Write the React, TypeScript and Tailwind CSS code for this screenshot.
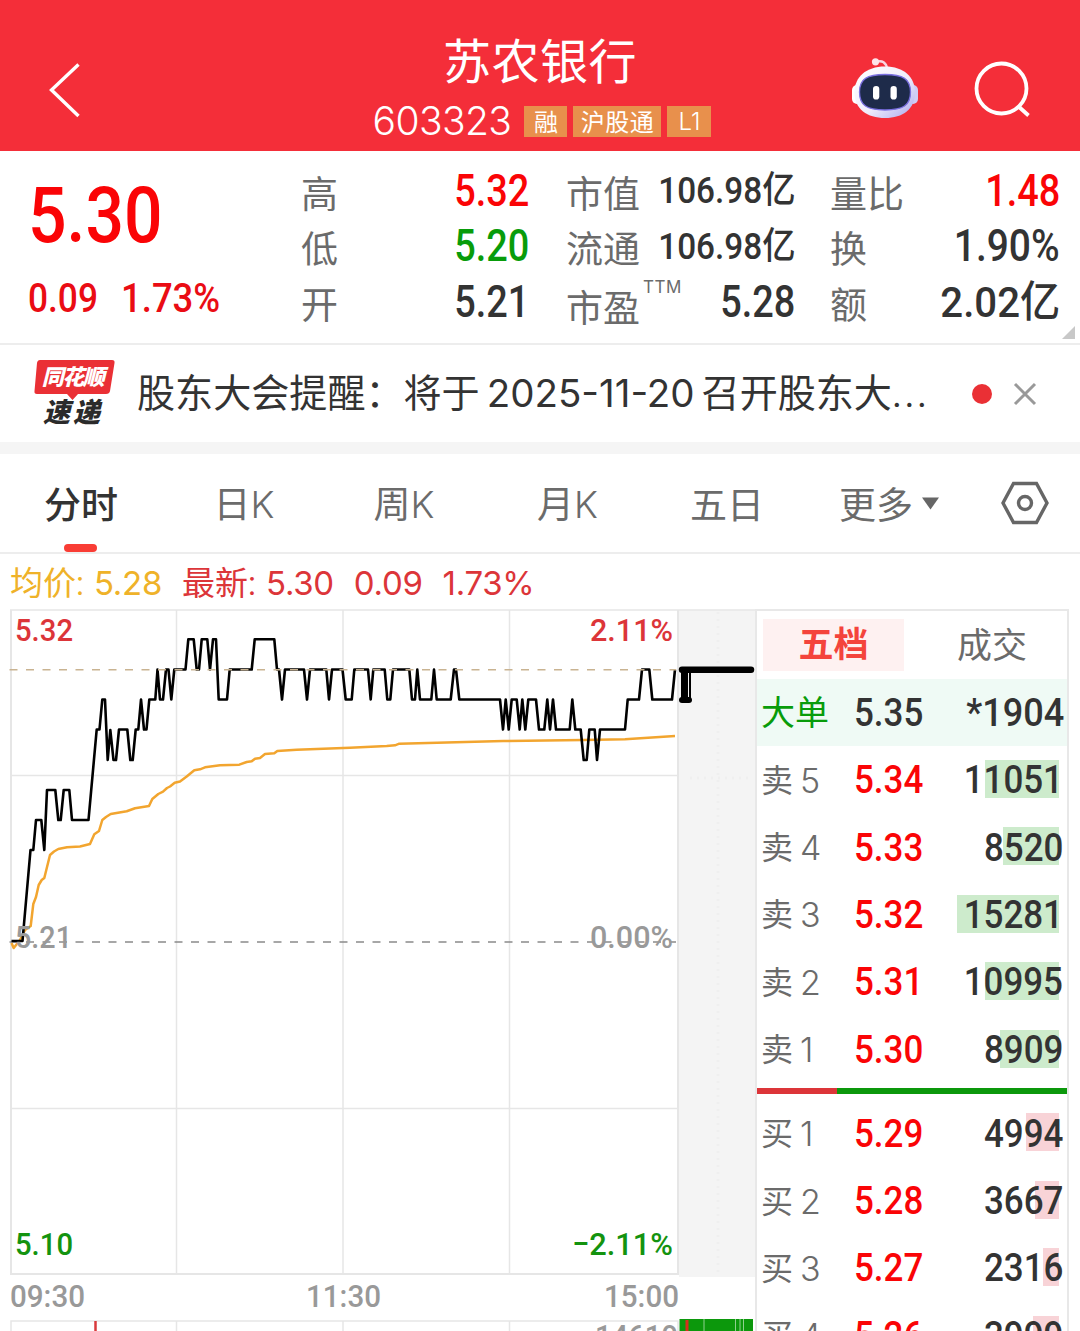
import React from 'react';
import { clsx } from 'clsx';

type Quote = { label: string; value: string; tone?: string; size?: string; sup?: string };
type Level = { label: string; price: string; volume: string; bar: number };

const quoteColumns: { box: string; items: Quote[] }[] = [
  {
    box: 'w-[228px]',
    items: [
      { label: '高', value: '5.32', tone: 'text-[#fa0406]' },
      { label: '低', value: '5.20', tone: 'text-[#089c0a]' },
      { label: '开', value: '5.21' },
    ],
  },
  {
    box: 'ml-[37px] w-[229px]',
    items: [
      { label: '市值', value: '106.98亿', size: 'scale-x-[.9] text-[37px]' },
      { label: '流通', value: '106.98亿', size: 'scale-x-[.9] text-[37px]' },
      { label: '市盈', value: '5.28', sup: 'TTM' },
    ],
  },
  {
    box: 'ml-[35px] w-[230px]',
    items: [
      { label: '量比', value: '1.48', tone: 'text-[#fa0406]' },
      { label: '换', value: '1.90%', size: 'scale-x-[.885] text-[44px]' },
      { label: '额', value: '2.02亿', size: 'scale-x-[.935] text-[43px]' },
    ],
  },
];

const asks: Level[] = [
  { label: '卖5', price: '5.34', volume: '11051', bar: 74 },
  { label: '卖4', price: '5.33', volume: '8520', bar: 56 },
  { label: '卖3', price: '5.32', volume: '15281', bar: 102 },
  { label: '卖2', price: '5.31', volume: '10995', bar: 74 },
  { label: '卖1', price: '5.30', volume: '8909', bar: 59 },
];

const bids: Level[] = [
  { label: '买1', price: '5.29', volume: '4994', bar: 33 },
  { label: '买2', price: '5.28', volume: '3667', bar: 24 },
  { label: '买3', price: '5.27', volume: '2316', bar: 16 },
  { label: '买4', price: '5.26', volume: '3999', bar: 26 },
];

const priceLine =
  '11.5,941 22.5,941 30.5,850 33.3,850 36,820 41.3,820 44.3,850 47,790 55.3,790 58.3,820 60.7,820 63.7,790 69.3,790 72,820 88.5,820 96.7,729.5 99.5,729.5 102.3,699.5 105,699.5 107.7,760 110.3,730 113.5,760 116,760 119,729.5 127.3,729.5 130.3,760 132.7,760 135.7,729.5 138.3,729.5 141,699.5 144,729.5 146.5,729.5 149.3,699.5 155.3,699.5 157.5,669.5 160,699.5 163,699.5 166,669.5 168.5,669.5 171.3,699.5 174.3,669.5 185.5,669.5 188.3,639.3 193.7,639.3 196.7,669.5 199,669.5 201.7,639.3 207.3,639.3 210,669.5 213,639.3 216,639.3 218.7,699.5 227,699.5 229.7,669.5 251.7,669.5 254.7,639.3 274.3,639.3 277,669.5 279,669.5 282,699.5 285,669.5 304,669.5 307,699.5 310,669.5 326.3,669.5 329,699.5 332,669.5 342.5,669.5 345.7,699.5 351.7,699.5 354.3,669.5 368,669.5 370.7,699.5 373.3,669.5 384.7,669.5 387.3,699.5 390.3,699.5 393,669.5 409.3,669.5 412,699.5 415,699.5 417.3,669.5 420,699.5 431.3,699.5 434,669.5 436.7,699.5 450.7,699.5 454,669.5 456,669.5 459.3,699.5 500,699.5 503,729.5 505.7,699.5 508.7,729.5 511.7,699.5 516.7,699.5 519.7,729.5 522.3,699.5 525.3,729.5 528.3,699.5 536,699.5 539,729.5 544.3,729.5 547.3,699.5 550,729.5 553,699.5 556,729.5 569.7,729.5 572.3,699.5 575.3,729.5 580.7,729.5 583.7,760 586.7,760 589.3,729.5 594.7,729.5 597,760 600,729.5 625,729.5 627.7,699.5 639,699.5 642,669.5 649.3,669.5 652.3,699.5 672,699.5 675,669.5';

const averageLine =
  '11.5,943 13.7,948 20,940 25,930 30.7,926 33.3,904 36,897 38.7,885 41.7,880 44.3,878 50,855 54,851.5 58.3,849 67,847.3 80,846.5 90,844 94.3,834.3 99,831 102.3,820 106,817 110.7,814 126.7,811.3 135,808.3 149,806 152.3,799 158.3,794 163,791.7 167,788 170,786.5 174.7,782.7 180,781.5 186.7,776.5 194.3,770.3 200,769.3 205,767.3 220,765.3 239.3,764.7 246.7,762 251.7,761.3 255,758.7 260,758 265,754 274.3,753.3 277.3,751 296.7,749.7 350,747.7 386.7,746 395,745.3 399.3,743.7 503.3,741 583.3,740 625,739.3 675,736';

// Narrow figures; the origin class decides which edge stays put
function Fig({ children, className }: { children: React.ReactNode; className?: string }) {
  return (
    <span className={clsx('inline-block whitespace-nowrap font-[Roboto,"Noto_Sans_CJK_SC",sans-serif] font-medium', className)}>
      {children}
    </span>
  );
}

function Header() {
  return (
    <header className="flex h-[151px] bg-[#f42e39] text-white">
      <div className="w-[300px] pt-[62px] pl-[48px]">
        <svg width="34" height="56" viewBox="0 0 34 56" fill="none" stroke="#fff" strokeWidth="3.4">
          <path d="M30.5 2.5 L3.5 28 L30.5 54" />
        </svg>
      </div>
      <div className="flex w-[480px] flex-col items-center">
        <h1 className="mt-[33px] text-[48px] leading-[60px] tracking-[0.5px]">苏农银行</h1>
        <div className="-mt-px flex h-[60px] items-center gap-[6px] pl-[4px] text-[24px]">
          <span className="mr-[7px] font-[Inter] text-[39px] font-[350] tracking-[-0.6px]">603323</span>
          <span className="flex h-[31px] w-[43px] items-center justify-center bg-[#e8904c] pt-[2px]">融</span>
          <span className="flex h-[31px] w-[88px] items-center justify-center bg-[#e8904c] pt-[2px] tracking-[0.5px]">沪股通</span>
          <span className="flex h-[31px] w-[44px] items-center justify-center bg-[#e8904c] font-[Inter] font-light">L1</span>
        </div>
      </div>
      <div className="flex flex-1 pt-[57px] pl-[70px]">
        <svg width="70" height="64" viewBox="0 0 70 64" fill="none">
          <defs>
            <linearGradient id="helmet" x1="0" y1="0" x2="1" y2="1">
              <stop offset="0" stopColor="#ffffff" />
              <stop offset="0.55" stopColor="#f0edfb" />
              <stop offset="1" stopColor="#a9a7ee" />
            </linearGradient>
          </defs>
          <path d="M26 5 C32 2.500 36.500 6 37 12" stroke="#f9d5e0" strokeWidth="2.500" />
          <circle cx="25.500" cy="4.800" r="3.600" fill="#fde4ea" />
          <rect x="2" y="28" width="10" height="19" rx="5" fill="#fff" />
          <rect x="58" y="28" width="10" height="19" rx="5" fill="#cfcdf6" />
          <path d="M35 9.500 C54 9.500 65 20 65 35.500 C65 52 53 61 35 61 C17 61 4.500 52 4.500 35.500 C4.500 20 16 9.500 35 9.500Z" fill="url(#helmet)" />
          <path d="M35 17.500 C53 17.500 60.500 22 60.500 35 C60.500 48.500 53 53 35 53 C17 53 9.500 48.500 9.500 35 C9.500 22 17 17.500 35 17.500Z" fill="#1e2b4a" stroke="#7a6fe0" strokeWidth="1.300" />
          <rect x="23" y="29" width="6.300" height="13.600" rx="3.100" fill="#fff" />
          <rect x="40.500" y="29" width="6.300" height="13.600" rx="3.100" fill="#fff" />
        </svg>
        <svg className="mt-[2px] ml-[53px]" width="60" height="58" viewBox="0 0 60 58" fill="none" stroke="#fff" strokeWidth="3.8">
          <circle cx="28.500" cy="29.500" r="25" />
          <path d="M45 47 L55.500 56.500" />
        </svg>
      </div>
    </header>
  );
}

function Quotes() {
  return (
    <section className="relative flex h-[194px] border-b-2 border-[#ededed] pl-[28px]">
      <div className="w-[273px] text-[#fa0406]">
        <div className="h-[122px] pt-[15px]">
          <Fig className="origin-left scale-x-[.875] text-[77.500px] leading-[100px]">5.30</Fig>
        </div>
        <div className="flex text-[#ea0c14]">
          <div className="w-[93px]">
            <Fig className="origin-left scale-x-[.86] text-[41px] leading-[50px]">0.09</Fig>
          </div>
          <Fig className="origin-left scale-x-[.89] text-[41px] leading-[50px]">1.73%</Fig>
        </div>
      </div>
      <div className="flex pt-[12px]">
        {quoteColumns.map((column, i) => (
          <div key={i} className={column.box}>
            {column.items.map((item) => (
              <div key={item.label} className="flex h-[55.5px] items-center justify-between">
                <span className={clsx('relative text-[37px] text-[#6b6b6b]', item.sup ? 'pt-[15px]' : 'pt-[9px]')}>
                  {item.label}
                  {item.sup && <sup className="absolute top-[12px] left-[77px] font-[Inter] text-[17px] leading-none tracking-[0.5px]">{item.sup}</sup>}
                </span>
                <Fig className={clsx('origin-right', item.size ?? 'scale-x-[.86] text-[44px]', item.tone ?? 'text-[#333]')}>
                  {item.value}
                </Fig>
              </div>
            ))}
          </div>
        ))}
      </div>
      <svg className="absolute right-[5px] bottom-[4px]" width="13" height="13">
        <path d="M13 0V13H0Z" fill="#c8c8c8" />
      </svg>
    </section>
  );
}

function NewsBar() {
  return (
    <section className="flex h-[97px] items-center pl-[33px]">
      <div className="relative h-[68px] w-[82px] italic">
        <svg className="absolute top-0 left-0" width="82" height="42">
          <path d="M7 0 H79 Q82 0 81.500 3 L77 31 Q76.500 34 73 34 H45 L39.500 40 L34 34 H4 Q1 34 1.500 31 L4 3 Q4.500 0 7 0Z" fill="#ea3035" />
        </svg>
        <div className="relative pt-[2px] pr-[3px] text-center text-[22px] leading-[32px] font-black tracking-[-1.5px] text-white">同花顺</div>
        <div className="relative pt-[5px] pr-[2px] text-center text-[27px] leading-[28px] font-black tracking-[3px] text-[#2b2b2b]">速递</div>
      </div>
      <p className="ml-[22px] w-[800px] pt-[2px] text-[38.100px] whitespace-nowrap text-[#333]">
        股东大会提醒：将于<span className="mx-[7px] font-[Inter] text-[38.500px]">2025-11-20</span>召开股东大<span className="tracking-[2.500px]">...</span>
      </p>
      <span className="ml-[35px] size-[20px] rounded-full bg-[#ea3035]" />
      <svg className="ml-[21px]" width="24" height="24" stroke="#999" strokeWidth="3">
        <path d="M2 2 L22 22 M22 2 L2 22" />
      </svg>
    </section>
  );
}

function Tabs() {
  return (
    <nav className="flex h-[112px] items-center border-t-[12px] border-b-2 border-t-[#f5f5f5] border-b-[#ededed] text-[37px] text-[#6b6b6b]">
      <div className="relative flex h-full w-[162px] items-center justify-center pt-[8px] font-medium text-[#333]">
        分时
        <span className="absolute bottom-0 left-[64px] h-[8px] w-[33px] rounded-full bg-[#f93d35]" />
      </div>
      <span className="w-[164px] pt-[5px] text-center">日<span className="font-[Inter] font-light">K</span></span>
      <span className="w-[156px] pt-[5px] text-center">周<span className="font-[Inter] font-light">K</span></span>
      <span className="w-[171px] pt-[5px] text-center">月<span className="font-[Inter] font-light">K</span></span>
      <span className="w-[148px] pt-[8px] text-center">五日</span>
      <span className="ml-[38px] pt-[8px]">更多</span>
      <svg className="ml-[9px]" width="17" height="13">
        <path d="M0 0.500 H17 L8.500 12.500Z" fill="#666" />
      </svg>
      <svg className="ml-[62px]" width="48" height="44" viewBox="0 0 48 44" fill="none" stroke="#666" strokeWidth="3.400">
        <path d="M12.500 2.500 H35.500 L46 22 L35.500 41.500 H12.500 L2 22Z" />
        <circle cx="24" cy="22" r="6.500" />
      </svg>
    </nav>
  );
}

function Chart() {
  return (
    <svg className="block shrink-0" width="755" height="722" viewBox="0 609 755 722" fill="none">
      <rect x="679" y="610" width="76" height="667" fill="#f4f4f4" />
      <g stroke="#e6e6e6" strokeWidth="1.500">
        <path d="M10 610 H755 M11 775.500 H677 M11 1108.500 H677 M176.500 610 V1274 M343 610 V1274 M509.500 610 V1274" />
        <path d="M11 610 V1274 H678 V610" strokeWidth="2" />
        <path d="M11 1331 V1321 H678 V1331 M176.500 1321 V1331 M343 1321 V1331 M509.500 1321 V1331" />
      </g>
      <path d="M718 612 V1276 M690 778 H753" stroke="#efefef" strokeWidth="3" strokeDasharray="2 5" />
      <g fontFamily="Roboto, sans-serif" fontWeight="500" fontSize="32">
        <text x="15" y="641" textLength="58" lengthAdjust="spacingAndGlyphs" fill="#dc3539">5.32</text>
        <text x="590" y="641" textLength="83" lengthAdjust="spacingAndGlyphs" fill="#dc3539">2.11%</text>
        <text x="15" y="1255" textLength="58" lengthAdjust="spacingAndGlyphs" fill="#14930f">5.10</text>
        <text x="572" y="1255" textLength="101" lengthAdjust="spacingAndGlyphs" fill="#14930f">−2.11%</text>
      </g>
      <path d="M9.500 942 H676" stroke="#8a8a8a" strokeWidth="1.500" strokeDasharray="8 8.500" />
      <polyline points={averageLine} stroke="#f2a52f" strokeWidth="2.500" strokeLinejoin="round" />
      <polyline points={priceLine} stroke="#000" strokeWidth="2.600" strokeLinejoin="round" />
      <path d="M9.500 669.700 H676" stroke="#c9b391" strokeWidth="1.500" strokeDasharray="8 8.500" />
      <g fontFamily="Roboto, sans-serif" fontWeight="500" fontSize="32" fill="#999">
        <text x="15" y="948" textLength="57" lengthAdjust="spacingAndGlyphs">5.21</text>
        <text x="590" y="948" textLength="83" lengthAdjust="spacingAndGlyphs">0.00%</text>
        <text x="10" y="1307" textLength="75" lengthAdjust="spacingAndGlyphs">09:30</text>
        <text x="306" y="1307" textLength="75" lengthAdjust="spacingAndGlyphs">11:30</text>
        <text x="604" y="1307" textLength="75" lengthAdjust="spacingAndGlyphs">15:00</text>
        <text x="595" y="1347" textLength="83" lengthAdjust="spacingAndGlyphs">14619</text>
      </g>
      {/* closing auction */}
      <path d="M682 669.700 H751" stroke="#000" strokeWidth="6.500" strokeLinecap="round" />
      <path d="M684.500 670 V700" stroke="#000" strokeWidth="7" />
      <path d="M690 670 V700" stroke="#000" strokeWidth="2" />
      <path d="M682 700 H689" stroke="#000" strokeWidth="6" strokeLinecap="round" />
      {/* volume */}
      <path d="M95.500 1321 V1331" stroke="#d93a3d" strokeWidth="2.500" />
      <rect x="679.500" y="1319" width="73.500" height="12" fill="#0c980c" />
      <path d="M687 1320 V1331" stroke="#d8301c" strokeWidth="3" />
      <path d="M704 1319 V1331 M735.500 1319 V1331 M740 1319 V1331 M743.500 1319 V1331" stroke="#8fd08f" strokeWidth="1" />
    </svg>
  );
}

function LevelRow({ level, side }: { level: Level; side: 'ask' | 'bid' }) {
  return (
    <div className="relative flex h-[67.4px] items-center pt-[2px] pl-[4px]">
      <span
        className={clsx('absolute top-[14px] right-[8px] h-[38px]', side === 'ask' ? 'bg-[#cdebcc]' : 'bg-[#f8d3d7]')}
        style={{ width: level.bar }}
      />
      <span className="flex w-[93px] items-center gap-[7px] text-[32px] text-[#6b6b6b]">
        {level.label[0]}
        <span className="font-[Inter] text-[34px] leading-[44px] font-[350]">{level.label[1]}</span>
      </span>
      <Fig className="origin-left scale-x-[.92] text-[38px] text-[#fa0406]">{level.price}</Fig>
      <Fig className="absolute right-[4px] origin-right scale-x-[.92] text-[38px] text-[#333]">{level.volume}</Fig>
    </div>
  );
}

function OrderBook() {
  return (
    <aside className="h-[722px] w-[314px] overflow-hidden border-t-2 border-r-2 border-l-2 border-[#e8e8e8]">
      <div className="flex h-[68px] items-center text-[35px]">
        <span className="ml-[6px] flex h-[52px] w-[141px] items-center justify-center bg-[#fef1f1] pt-[3px] font-bold text-[#f4443c]">五档</span>
        <span className="ml-[53px] pt-[5px] text-[#6b6b6b]">成交</span>
      </div>
      <div className="relative flex h-[67px] items-center bg-[#effaf5] pt-[2px] pl-[4px]">
        <span className="w-[93px] text-[34px] text-[#089c0a]">大单</span>
        <Fig className="origin-left scale-x-[.92] text-[38px] text-[#333]">5.35</Fig>
        <Fig className="absolute right-[3px] origin-right scale-x-[.95] text-[38px] text-[#333]">*1904</Fig>
      </div>
      {asks.map((level) => (
        <LevelRow key={level.label} level={level} side="ask" />
      ))}
      <div className="mt-[5px] mb-[5.500px] flex h-[6px]">
        <span className="w-[80px] bg-[#dc3539]" />
        <span className="flex-1 bg-[#0c980c]" />
      </div>
      {bids.map((level) => (
        <LevelRow key={level.label} level={level} side="bid" />
      ))}
    </aside>
  );
}

export default function App() {
  return (
    <div className="h-[1331px] w-[1080px] overflow-hidden bg-white font-[Roboto,'Noto_Sans_CJK_SC',sans-serif]">
      <Header />
      <Quotes />
      <NewsBar />
      <Tabs />
      <div className="flex h-[55px] items-center pt-[4px] pl-[10px] text-[33px]">
        <span className="text-[#efb229]">
          均价:<span className="ml-[10px] font-[Inter] tracking-[-0.3px]">5.28</span>
        </span>
        <span className="ml-[20px] text-[#dc3539]">
          最新:<span className="ml-[10px] font-[Inter] tracking-[-0.3px]">5.30</span>
        </span>
        <span className="ml-[20px] font-[Inter] tracking-[-0.3px] text-[#dc3539]">0.09</span>
        <span className="ml-[20px] font-[Inter] tracking-[-0.3px] text-[#dc3539]">1.73%</span>
      </div>
      <div className="flex">
        <Chart />
        <OrderBook />
      </div>
    </div>
  );
}
